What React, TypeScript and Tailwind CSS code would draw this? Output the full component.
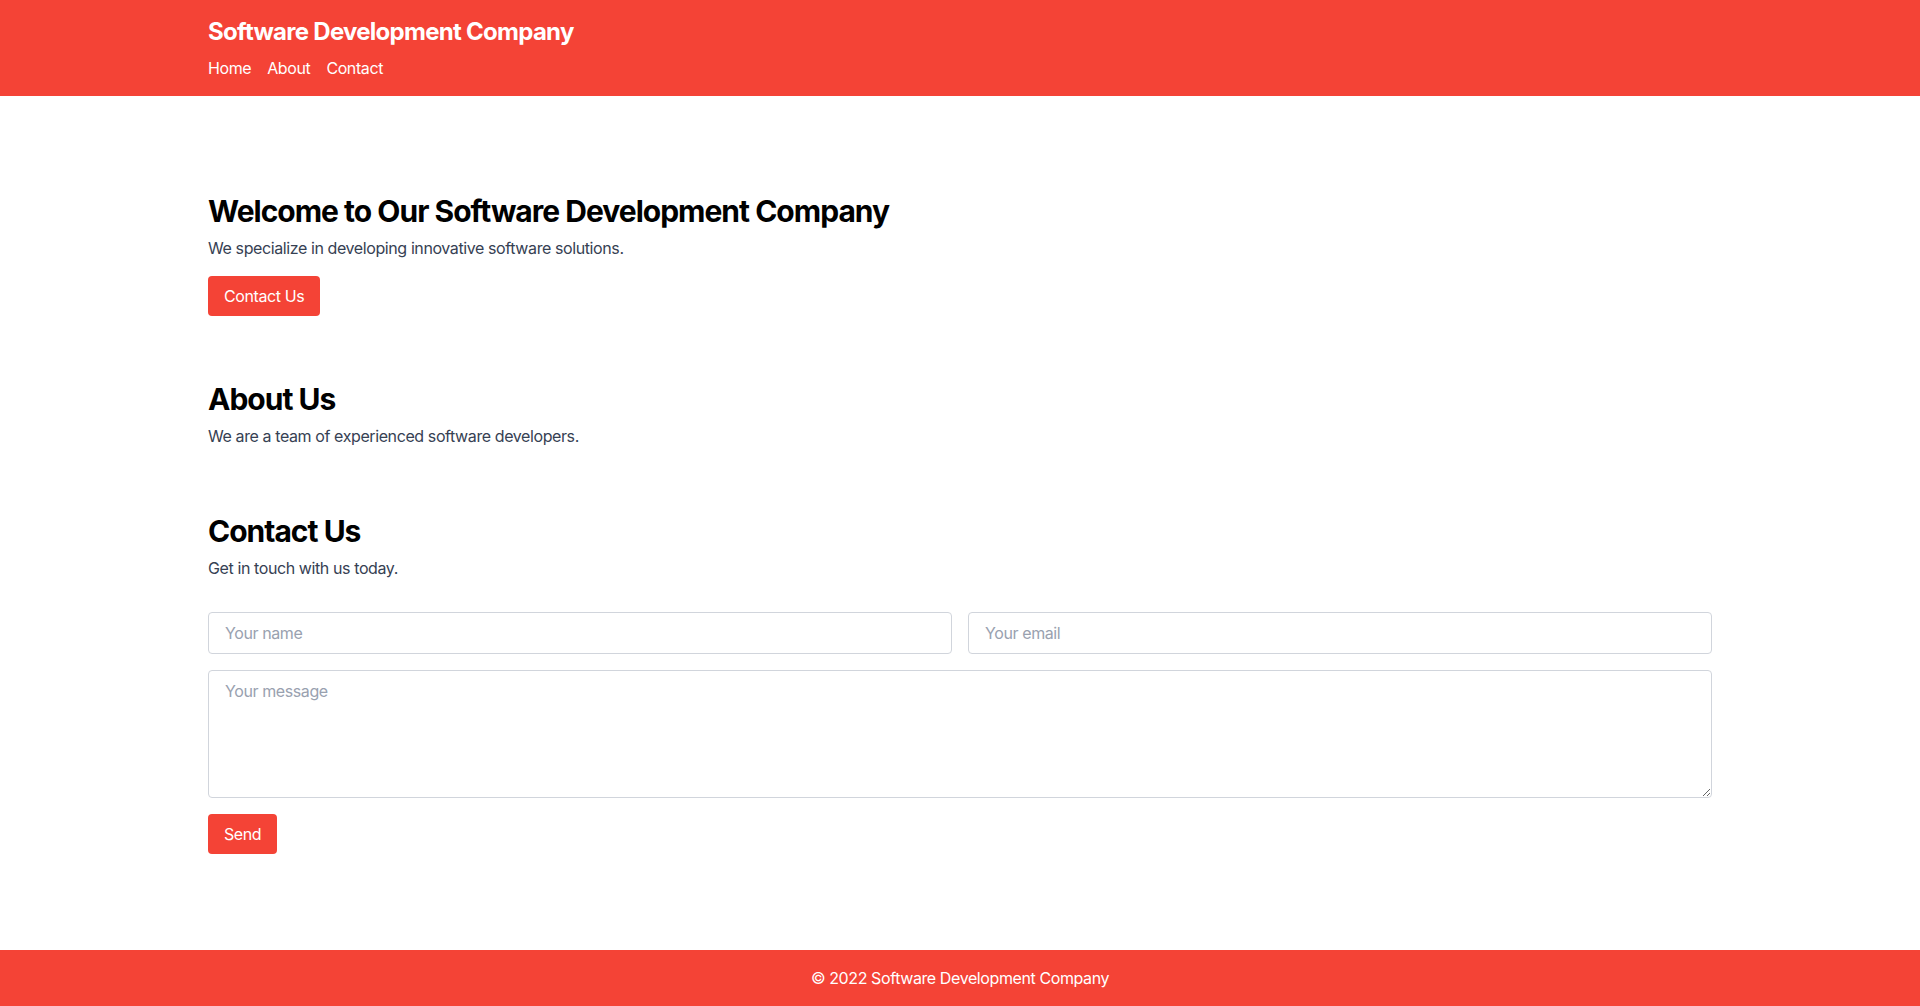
const App = () => {
  return (
    <div className="min-h-screen flex flex-col bg-white font-['Inter',sans-serif] tracking-tight">
      <header className="bg-[#f44336] text-white">
        <div className="container mx-auto px-4 py-4">
          <h1 className="text-2xl font-bold tracking-[-0.03em] mb-2">Software Development Company</h1>
          <nav className="flex space-x-4">
            <a href="#home">Home</a>
            <a href="#about">About</a>
            <a href="#contact">Contact</a>
          </nav>
        </div>
      </header>

      <main className="flex-1 py-16">
        <section id="home" className="container mx-auto px-4 py-8">
          <h2 className="text-3xl font-bold tracking-[-0.033em] text-black pt-px mb-[7px]">
            Welcome to Our Software Development Company
          </h2>
          <p className="text-gray-700 mb-4">We specialize in developing innovative software solutions.</p>
          <button className="bg-[#f44336] text-white px-4 py-2 rounded">Contact Us</button>
        </section>

        <section id="about" className="container mx-auto px-4 py-8">
          <h2 className="text-3xl font-bold tracking-[-0.033em] text-black pt-px mb-[7px]">About Us</h2>
          <p className="text-gray-700">We are a team of experienced software developers.</p>
        </section>

        <section id="contact" className="container mx-auto px-4 py-8">
          <h2 className="text-3xl font-bold tracking-[-0.033em] text-black pt-px mb-[7px]">Contact Us</h2>
          <p className="text-gray-700 mb-8">Get in touch with us today.</p>
          <form onSubmit={(e) => e.preventDefault()}>
            <div className="grid grid-cols-2 gap-4 mb-4">
              <input
                type="text"
                placeholder="Your name"
                className="w-full border border-gray-300 rounded px-4 py-2 placeholder-gray-400 outline-none"
              />
              <input
                type="email"
                placeholder="Your email"
                className="w-full border border-gray-300 rounded px-4 py-2 placeholder-gray-400 outline-none"
              />
            </div>
            <textarea
              placeholder="Your message"
              className="block w-full h-32 border border-gray-300 rounded px-4 py-2 mb-4 placeholder-gray-400 outline-none"
            />
            <button type="submit" className="bg-[#f44336] text-white px-4 py-2 rounded">
              Send
            </button>
          </form>
        </section>
      </main>

      <footer className="bg-[#f44336] text-white py-4 text-center">
        <p>© 2022 Software Development Company</p>
      </footer>
    </div>
  );
};

export default App;
